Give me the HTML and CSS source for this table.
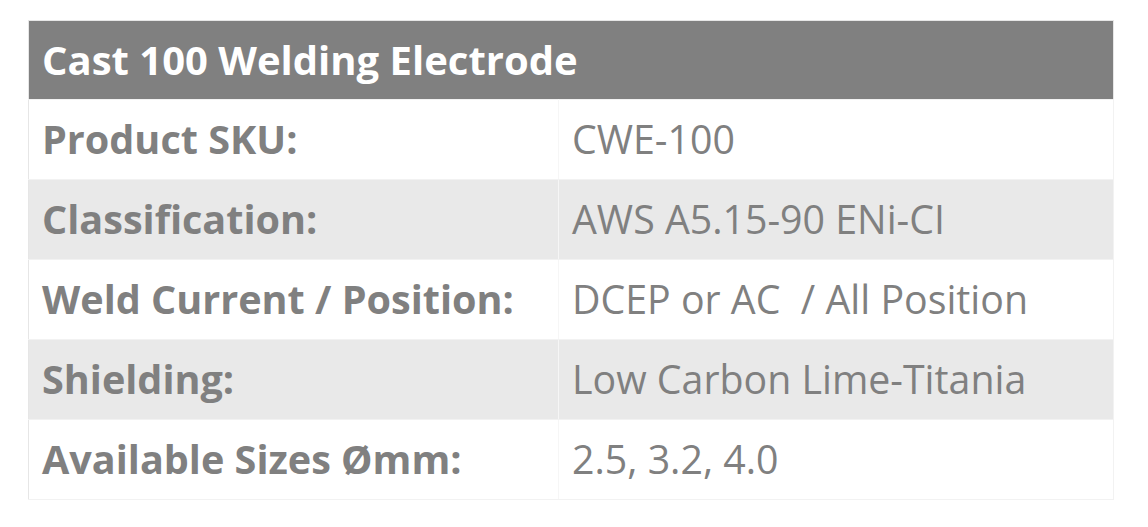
FILE: index.html
```html
<!DOCTYPE html>
<html>
<head>
<meta charset="utf-8">
<link rel="stylesheet" href="styles.css">
</head>
<body>
<table class="spec">
  <colgroup>
    <col class="col-label">
    <col class="col-value">
  </colgroup>
  <thead>
    <tr><th colspan="2" class="title">Cast 100 Welding Electrode</th></tr>
  </thead>
  <tbody>
    <tr class="row"><td class="label">Product SKU:</td><td class="value">CWE-100</td></tr>
    <tr class="row alt"><td class="label">Classification:</td><td class="value">AWS A5.15-90 ENi-CI</td></tr>
    <tr class="row"><td class="label">Weld Current / Position:</td><td class="value">DCEP or AC&nbsp; / All Position</td></tr>
    <tr class="row alt"><td class="label">Shielding:</td><td class="value">Low Carbon Lime-Titania</td></tr>
    <tr class="row"><td class="label">Available Sizes Ømm:</td><td class="value">2.5, 3.2, 4.0</td></tr>
  </tbody>
</table>
</body>
</html>
```
FILE: styles.css
```css
html, body {
  margin: 0;
  padding: 0;
  background: #ffffff;
}
body {
  padding: 20px 0 0 28px;
  font-family: "Open Sans", "Noto Sans", sans-serif;
}
.spec {
  width: 1086px;
  border-collapse: collapse;
  border: 1px solid #e6e6e6;
  table-layout: fixed;
}
.col-label {
  width: 530px;
}
.title {
  background: #808080;
  color: #ffffff;
  font-weight: 700;
  font-size: 40px;
  text-align: left;
  height: 78px;
  padding: 0 13px;
  line-height: 1;
}
.row td {
  height: 80px;
  box-sizing: border-box;
  padding: 0 13px;
  color: #808080;
  line-height: 1;
  border: 1px solid #f2f2f2;
  border-left: none;
}
.row td:first-child {
  border-right: 1px solid #f6f6f6;
}
.row.alt td {
  background: #e9e9e9;
}
.label {
  font-weight: 700;
  font-size: 39.6px;
}
.value {
  font-weight: 400;
  font-size: 39.3px;
}
```
